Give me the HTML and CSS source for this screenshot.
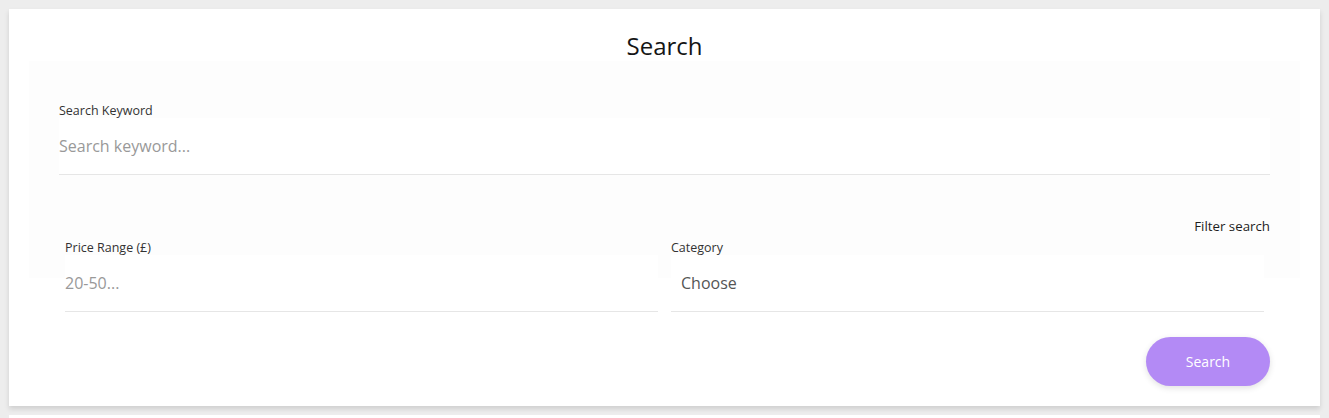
FILE: index.html
```html
<!DOCTYPE html>
<html lang="en">
<head>
<meta charset="utf-8">
<title>Search</title>
<link rel="stylesheet" href="styles.css">
</head>
<body>
<section class="card">
  <h1 class="title">Search</h1>
  <form class="panel" onsubmit="return false">
    <div class="field">
      <label class="label" for="kw">Search Keyword</label>
      <input class="input" id="kw" type="text" placeholder="Search keyword...">
    </div>
    <div class="filter">Filter search</div>
    <div class="row">
      <div class="field">
        <label class="label" for="price">Price Range (£)</label>
        <input class="input" id="price" type="text" placeholder="20-50...">
      </div>
      <div class="field">
        <label class="label" for="cat">Category</label>
        <div class="input select" id="cat">Choose</div>
      </div>
    </div>
  </form>
  <div class="actions">
    <button class="btn" type="button">Search</button>
  </div>
</section>
<section class="card next"></section>
</body>
</html>
```

FILE: styles.css
```css
* { box-sizing: border-box; }
html, body { margin: 0; padding: 0; }
body {
  background: #ededed;
  padding: 9px 9px 0;
  font-family: "Open Sans", "Noto Sans", sans-serif;
  color: #222;
  overflow: hidden;
  height: 418px;
}
.card {
  background: #fff;
  height: 397px;
  padding: 0 20px;
  box-shadow: 0 3px 5px rgba(0, 0, 0, 0.13);
}
.card.next {
  margin-top: 9px;
  height: 3px;
  box-shadow: none;
}
.title {
  margin: 0;
  height: 52px;
  padding-top: 22px;
  font-size: 24px;
  line-height: 30px;
  font-weight: 400;
  text-align: center;
  color: #151515;
}
.panel {
  background: #fdfdfd;
  height: 217px;
  padding: 42px 30px 0;
}
.field {
  display: flex;
  flex-direction: column;
}
.label {
  font-size: 12.5px;
  line-height: 15px;
  color: #333;
}
.input {
  display: block;
  width: 100%;
  height: 57px;
  border: 0;
  border-bottom: 1px solid #e6e6e6;
  background: #fff;
  font-family: inherit;
  font-size: 16px;
  color: #555;
  padding: 0;
  outline: none;
}
.input::placeholder { color: #999; }
.select {
  display: flex;
  align-items: center;
  padding-left: 10px;
}
.filter {
  margin-top: 42px;
  text-align: right;
  font-size: 13.3px;
  line-height: 18px;
  color: #1e1e1e;
}
.row {
  display: grid;
  grid-template-columns: 1fr 1fr;
  gap: 13px;
  padding: 0 6px;
  margin-top: 5px;
}
.actions {
  display: flex;
  justify-content: flex-end;
  padding: 59px 30px 0;
}
.btn {
  width: 124px;
  height: 49px;
  border: 0;
  border-radius: 25px;
  background: #b38af5;
  color: #fff;
  font-family: inherit;
  font-size: 14px;
  box-shadow: 0 2px 6px rgba(0, 0, 0, 0.12);
}
```
